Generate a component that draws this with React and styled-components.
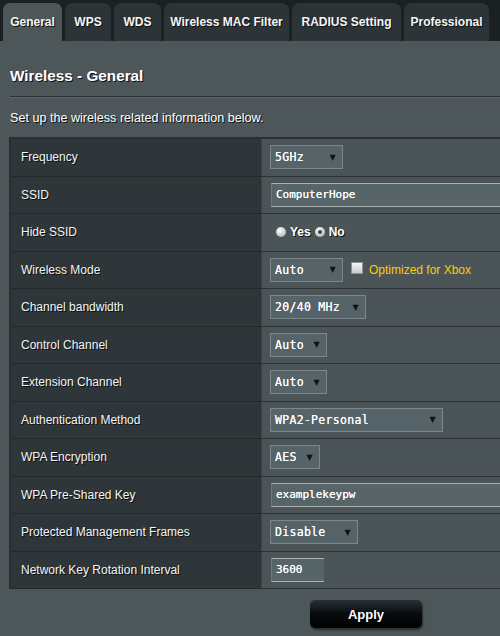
import React from 'react';
import styled, { createGlobalStyle } from 'styled-components';

const GlobalStyle = createGlobalStyle`
  html, body {
    margin: 0;
    padding: 0;
    background: #1b2022;
  }
  body {
    font-family: "Liberation Sans", Arial, sans-serif;
    width: 500px;
    height: 636px;
    overflow: hidden;
  }
`;

const Page = styled.div`
  display: flex;
  flex-direction: column;
  height: 636px;
  background: #1b2022;
`;

const TabBar = styled.div`
  display: flex;
  gap: 3px;
  padding: 3px 0 0 3px;
  height: 38px;
`;

const Tab = styled.div`
  display: flex;
  align-items: center;
  justify-content: center;
  width: ${p => p.w}px;
  height: 38px;
  box-sizing: border-box;
  border-radius: 7px 7px 0 0;
  background: ${p => (p.active ? '#4d5659' : '#2c3437')};
  color: #f4f6f6;
  font-weight: bold;
  font-size: 12px;
  text-shadow: 1px 1px 0 #111;
  white-space: nowrap;
`;

const Panel = styled.div`
  flex: 1;
  background: #4d5659;
  display: flex;
  flex-direction: column;
`;

const Heading = styled.h1`
  margin: 25px 0 0 10px;
  height: 20px;
  font-size: 15.3px;
  line-height: 20px;
  color: #fff;
  font-weight: bold;
  text-shadow: 1px 1px 0 #111;
`;

const Rule = styled.div`
  margin: 10px 0 0 10px;
  height: 1px;
  background: #2c3235;
  border-bottom: 1px solid #5d676a;
`;

const Intro = styled.div`
  margin: 12px 0 0 10px;
  height: 16px;
  font-size: 12.6px;
  line-height: 16px;
  color: #fff;
  text-shadow: 1px 1px 0 #111;
`;

const Table = styled.div`
  margin: 11px 0 0 9px;
  display: grid;
  grid-template-columns: 251px 1fr;
  border-top: 2px solid #2a3033;
  border-left: 2px solid #283033;
`;

const Label = styled.div`
  height: 36.5px;
  display: flex;
  align-items: center;
  padding-left: 10px;
  background: #2f3639;
  border-bottom: 1px solid #232a2c;
  border-right: 1px solid #3b4447;
  color: #f3f5f5;
  font-size: 12px;
  text-shadow: 1px 1px 0 #0c0f10;
`;

const Value = styled.div`
  height: 36.5px;
  display: flex;
  align-items: center;
  padding-left: 8px;
  gap: 8px;
  background: #4b5558;
  border-bottom: 1px solid #2c3336;
  color: #fff;
  font-size: 12px;
`;

const Select = styled.div`
  display: flex;
  align-items: center;
  justify-content: space-between;
  box-sizing: border-box;
  width: ${p => p.w}px;
  height: 24px;
  padding: 0 6px 0 4px;
  background: #56646a;
  border: 1px solid #7b878a;
  font-family: "DejaVu Sans Mono", monospace;
  font-size: 11.5px;
  color: #fff;
  letter-spacing: 0.3px;
  text-shadow: 0 0 0.4px #fff;
`;

const Arrow = styled.span`
  font-size: 8px;
  color: #0e1214;
  font-family: "DejaVu Sans", sans-serif;
  text-shadow: none;
`;

const TextInput = styled.div`
  display: flex;
  align-items: center;
  box-sizing: border-box;
  width: ${p => p.w || '100%'};
  height: 24px;
  margin-left: 1px;
  padding-left: 4px;
  background: #576569;
  border-top: 1px solid #a9b1b3;
  border-bottom: 1px solid #a9b1b3;
  border-left: 1px solid #6a7679;
  font-family: "DejaVu Sans Mono", monospace;
  font-size: 11px;
  color: #fff;
  text-shadow: 0 0 0.4px #fff;
`;

const RadioGroup = styled.div`
  display: flex;
  align-items: center;
  font-weight: bold;
  font-size: 12px;
  color: #fff;
  text-shadow: 1px 1px 0 #111;
`;

const Radio = styled.span`
  display: inline-block;
  width: 10px;
  height: 10px;
  border-radius: 50%;
  margin: 0 4px 0 ${p => p.gap}px;
  background: radial-gradient(circle at 40% 35%, #ffffff, #c5c9ca 60%, #9aa1a3);
  position: relative;
  ${p => p.checked && `
    &::after {
      content: '';
      position: absolute;
      left: 3px;
      top: 3px;
      width: 4px;
      height: 4px;
      border-radius: 50%;
      background: #3d4447;
    }
  `}
`;

const Check = styled.span`
  display: inline-block;
  width: 10px;
  height: 10px;
  margin-top: -4px;
  background: linear-gradient(#f5f5f5, #c8cccd);
  border: 1px solid #8d9598;
`;

const Xbox = styled.span`
  color: #ffcc00;
  font-size: 12px;
  margin-left: -2px;
`;

const Footer = styled.div`
  display: flex;
  justify-content: flex-start;
  padding: 11px 0 0 310px;
`;

const ApplyButton = styled.div`
  width: 112px;
  height: 28px;
  display: flex;
  align-items: center;
  justify-content: center;
  border-radius: 5px;
  background: linear-gradient(#2a3236, #0a0e10 45%, #000);
  box-shadow: 1px 2px 2px rgba(0, 0, 0, 0.45);
  color: #fff;
  font-weight: bold;
  font-size: 13px;
  text-shadow: 1px 1px 0 #000;
`;

const tabs = [
  ['General', 59],
  ['WPS', 46],
  ['WDS', 47],
  ['Wireless MAC Filter', 125],
  ['RADIUS Setting', 109],
  ['Professional', 85],
];

const Sel = ({ w, children }) => (
  <Select w={w}>
    <span>{children}</span>
    <Arrow>▼</Arrow>
  </Select>
);

function App() {
  const rows = [
    ['Frequency', <Sel w={73}>5GHz</Sel>],
    ['SSID', <TextInput>ComputerHope</TextInput>],
    ['Hide SSID', (
      <RadioGroup>
        <Radio gap={6} />Yes<Radio gap={4} checked />No
      </RadioGroup>
    )],
    ['Wireless Mode', (
      <>
        <Sel w={73}>Auto</Sel>
        <Check />
        <Xbox>Optimized for Xbox</Xbox>
      </>
    )],
    ['Channel bandwidth', <Sel w={96}>20/40 MHz</Sel>],
    ['Control Channel', <Sel w={57}>Auto</Sel>],
    ['Extension Channel', <Sel w={57}>Auto</Sel>],
    ['Authentication Method', <Sel w={173}>WPA2-Personal</Sel>],
    ['WPA Encryption', <Sel w={50}>AES</Sel>],
    ['WPA Pre-Shared Key', <TextInput>examplekeypw</TextInput>],
    ['Protected Management Frames', <Sel w={88}>Disable</Sel>],
    ['Network Key Rotation Interval', <TextInput w="53px">3600</TextInput>],
  ];

  return (
    <Page>
      <GlobalStyle />
      <TabBar>
        {tabs.map(([name, w], i) => (
          <Tab key={name} w={w} active={i === 0}>{name}</Tab>
        ))}
      </TabBar>
      <Panel>
        <Heading>Wireless - General</Heading>
        <Rule />
        <Intro>Set up the wireless related information below.</Intro>
        <Table>
          {rows.map(([label, value]) => (
            <React.Fragment key={label}>
              <Label>{label}</Label>
              <Value>{value}</Value>
            </React.Fragment>
          ))}
        </Table>
        <Footer>
          <ApplyButton>Apply</ApplyButton>
        </Footer>
      </Panel>
    </Page>
  );
}

export default App;
